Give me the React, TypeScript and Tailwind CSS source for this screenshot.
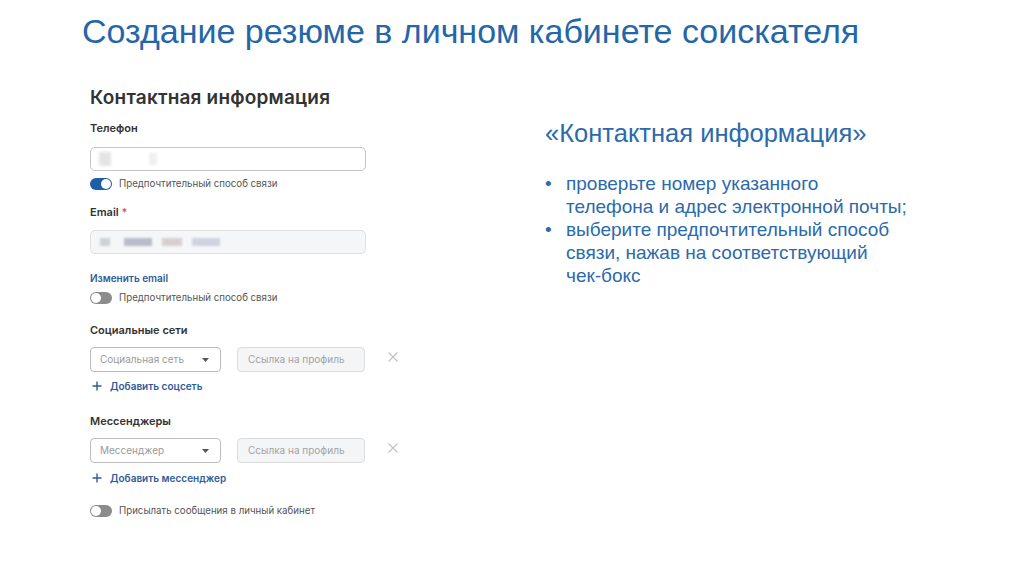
import React from 'react';

const Toggle = ({ on, label }: { on?: boolean; label: string }) => (
  <div className="flex items-center h-4">
    <div className={`relative w-[22px] h-[12px] rounded-full ${on ? 'bg-[#1d5ea8]' : 'bg-[#8c8c8c]'}`}>
      <div
        className={`absolute top-[1px] w-[10px] h-[10px] rounded-full bg-white ${on ? 'right-[1px]' : 'left-[1px]'}`}
      />
    </div>
    <span className="ml-[7px] text-[9.7px] text-[#555]">{label}</span>
  </div>
);

const Label = ({ children, className = '' }: { children: React.ReactNode; className?: string }) => (
  <div className={`h-4 leading-4 text-[11px] font-semibold text-[#333] ${className}`}>{children}</div>
);

const AddLink = ({ text, className = '' }: { text: string; className?: string }) => (
  <div className={`flex items-center h-4 ${className}`}>
    <svg width="10" height="10" viewBox="0 0 10 10" className="ml-[2px]">
      <path d="M5 0.5v9M0.5 5h9" stroke="#2f5b9a" strokeWidth="1.4" />
    </svg>
    <span className="ml-[8px] text-[10px] font-semibold text-[#2f5b9a]">{text}</span>
  </div>
);

const SelectRow = ({ placeholder, className = '' }: { placeholder: string; className?: string }) => (
  <div className={`flex items-center ${className}`}>
    <div className="flex items-center justify-between w-[131px] h-[25px] rounded-[4px] border border-[#bdbdbd] bg-white pl-[9px] pr-[11px]">
      <span className="text-[10px] text-[#9a9a9a]">{placeholder}</span>
      <svg width="7" height="4" viewBox="0 0 7 4">
        <path d="M0 0h7L3.5 4z" fill="#555" />
      </svg>
    </div>
    <div className="ml-[16px] flex items-center w-[128px] h-[25px] rounded-[4px] border border-[#dcdcdc] bg-[#f4f5f7] pl-[10px]">
      <span className="text-[10px] text-[#a3a3a3]">Ссылка на профиль</span>
    </div>
    <svg width="10" height="10" viewBox="0 0 10 10" className="ml-[23px] -mt-[6px]">
      <path d="M0.5 0.5l9 9M9.5 0.5l-9 9" stroke="#c4c4c4" strokeWidth="1.2" />
    </svg>
  </div>
);

const App = () => {
  return (
    <div className="w-full h-[574px] bg-white overflow-hidden">
      <div className="pt-[11px] pl-[82px]">
        <h1 className="h-10 leading-10 text-[34px] text-[#2566a8] font-['Liberation_Sans',Arial,sans-serif]">
          Создание резюме в личном кабинете соискателя
        </h1>
      </div>

      <div className="flex pl-[90px]">
        {/* Form */}
        <div className="w-[455px] pt-[35px] font-['Inter','Noto_Sans',sans-serif]">
          <div className="h-6 leading-6 text-[19px] font-semibold tracking-[0.01em] text-[#333]">
            Контактная информация
          </div>

          <Label className="mt-[10px]">Телефон</Label>
          <div className="mt-[11px] w-[276px] h-[24px] rounded-[5px] border border-[#c6c6c6] bg-white flex items-center pl-[8px]">
            <div className="w-[12px] h-[14px] bg-[#e4e4e6] blur-[1.5px]" />
            <div className="ml-[38px] w-[8px] h-[12px] bg-[#f0f0f2] blur-[1.5px]" />
          </div>
          <div className="mt-[5px]">
            <Toggle on label="Предпочтительный способ связи" />
          </div>

          <Label className="mt-[12px]">
            Email <span className="text-[#e0574f]">*</span>
          </Label>
          <div className="mt-[10px] w-[276px] h-[24px] rounded-[5px] border border-[#e0e0e0] bg-[#f5f6f8] flex items-center pl-[9px]">
            <div className="w-[10px] h-[8px] bg-[#cdd0d6] blur-[1px]" />
            <div className="ml-[14px] w-[28px] h-[8px] bg-[#b9bdc9] blur-[1px]" />
            <div className="ml-[10px] w-[20px] h-[8px] bg-[#d8cfd0] blur-[1px]" />
            <div className="ml-[10px] w-[28px] h-[8px] bg-[#cfd4e0] blur-[1px]" />
          </div>

          <div className="mt-[16px] h-4 leading-4 text-[10px] font-semibold text-[#2f5b9a]">Изменить email</div>
          <div className="mt-[4px]">
            <Toggle label="Предпочтительный способ связи" />
          </div>

          <Label className="mt-[16px]">Социальные сети</Label>
          <SelectRow placeholder="Социальная сеть" className="mt-[9px]" />
          <AddLink text="Добавить соцсеть" className="mt-[6px]" />

          <Label className="mt-[19px]">Мессенджеры</Label>
          <SelectRow placeholder="Мессенджер" className="mt-[9px]" />
          <AddLink text="Добавить мессенджер" className="mt-[7px]" />

          <div className="mt-[17px]">
            <Toggle label="Присылать сообщения в личный кабинет" />
          </div>
        </div>

        {/* Notes */}
        <div className="flex-1 pt-[68px] font-['Liberation_Sans',Arial,sans-serif] text-[#2b6aab]">
          <div className="h-7 leading-7 text-[25.5px]">«Контактная информация»</div>
          <ul className="mt-[25px] text-[19px] leading-[23px]">
            <li className="flex">
              <span className="w-[21px]">•</span>
              <span className="whitespace-nowrap">
                проверьте номер указанного
                <br />
                телефона и адрес электронной почты;
              </span>
            </li>
            <li className="flex">
              <span className="w-[21px]">•</span>
              <span className="whitespace-nowrap">
                выберите предпочтительный способ
                <br />
                связи, нажав на соответствующий
                <br />
                чек-бокс
              </span>
            </li>
          </ul>
        </div>
      </div>
    </div>
  );
};

export default App;
